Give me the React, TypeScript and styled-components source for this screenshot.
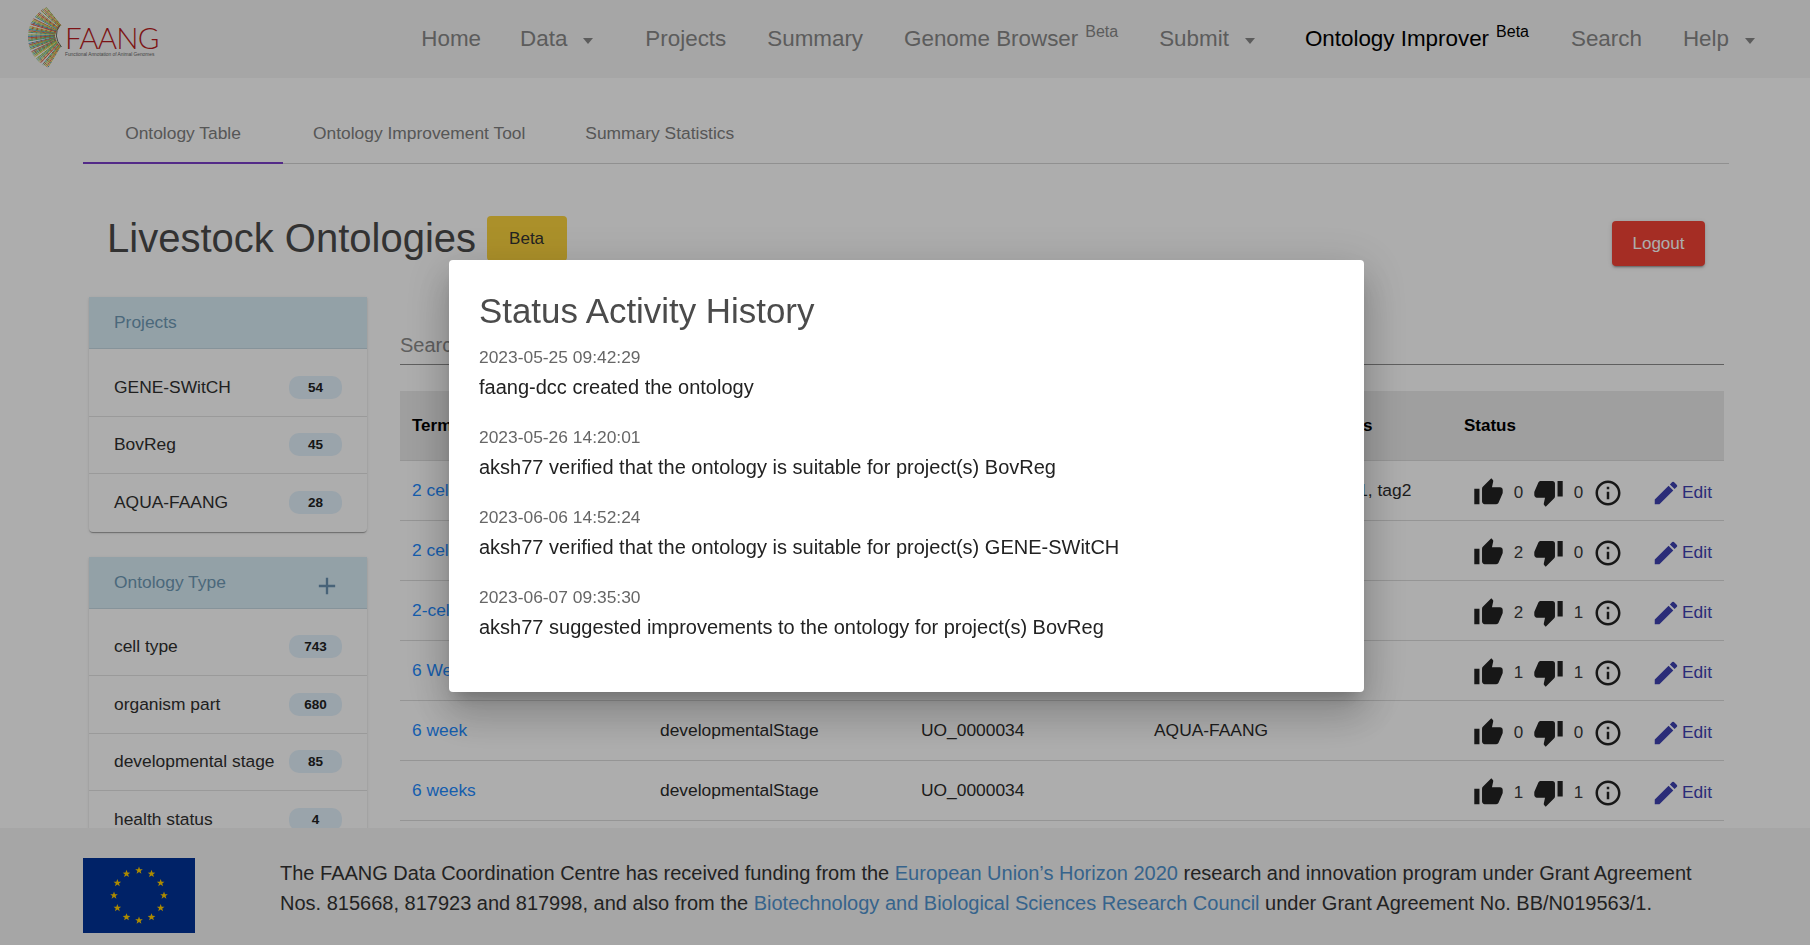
import styled, { createGlobalStyle } from 'styled-components';
import { MdAdd, MdEdit, MdInfoOutline, MdThumbDown, MdThumbUp } from 'react-icons/md';

const GlobalStyle = createGlobalStyle`
  html, body {
    margin: 0;
    padding: 0;
    height: 100%;
    overflow: hidden;
    background: #fff;
    font-family: "Liberation Sans", Arial, sans-serif;
  }
`;

const Page = styled.div`
  width: 1810px;
  height: 945px;
  display: flex;
  flex-direction: column;
  overflow: hidden;
`;

// top navigation
const Header = styled.header`
  flex: 0 0 78px;
  display: flex;
  align-items: center;
  justify-content: space-between;
  background: #f5f5f5;
  padding: 0 55px 0 28px;
`;

const LogoWrap = styled.div`
  display: flex;
  align-items: center;
  width: 132px;
  height: 64px;
`;

const LogoWords = styled.div`
  display: flex;
  flex-direction: column;
  margin-left: 3px;
  margin-top: 5px;
`;

const LogoName = styled.span`
  font-family: Lato, "Liberation Sans", sans-serif;
  font-size: 29.5px;
  line-height: 27px;
  letter-spacing: -0.8px;
  color: #b81c22;
  font-weight: 300;
`;

const LogoTag = styled.span`
  font-size: 4.8px;
  line-height: 8px;
  white-space: nowrap;
  color: #666;
`;

const Nav = styled.nav`
  display: flex;
  align-items: center;
`;

const NavItem = styled.a<{ $active?: boolean; $gap?: number }>`
  position: relative;
  display: flex;
  align-items: center;
  font-size: 22.4px;
  line-height: 28px;
  margin-left: ${(p) => p.$gap ?? 41}px;
  color: ${(p) => (p.$active ? '#000' : '#888')};
`;

const Sup = styled.sup`
  font-size: 16px;
  line-height: 16px;
  align-self: flex-start;
  margin: -1px 0 0 7px;
`;

const Caret = styled.i`
  width: 0;
  height: 0;
  margin: 4px 0 0 16px;
  border-left: 5.5px solid transparent;
  border-right: 5.5px solid transparent;
  border-top: 6px solid #888;
`;

// main area
const Main = styled.main`
  flex: 1;
  min-height: 0;
  overflow: hidden;
  padding: 25px 81px 0 83px;
`;

const Tabs = styled.div`
  display: flex;
  height: 60px;
  border-bottom: 1px solid #d4d4d4;
`;

const Tab = styled.div<{ $active?: boolean }>`
  display: flex;
  align-items: center;
  justify-content: center;
  min-width: 200px;
  box-sizing: border-box;
  padding: 1px 30px 0;
  font-size: 17.4px;
  color: #808080;
  margin-bottom: -1px;
  border-bottom: 2px solid ${(p) => (p.$active ? '#7b3fc9' : 'transparent')};
  &:not(:first-child) {
    min-width: 0;
  }
`;

const TitleRow = styled.div`
  display: flex;
  align-items: flex-start;
  margin-top: 52px;
  padding: 0 24px;
  height: 50px;
`;

const Title = styled.h1`
  margin: 0;
  font-size: 40px;
  font-weight: 400;
  line-height: 44px;
  color: #4b4b4b;
`;

const BetaBadge = styled.span`
  display: flex;
  align-items: center;
  justify-content: center;
  width: 80px;
  height: 45px;
  margin-left: 10.5px;
  border-radius: 4px;
  background: #fdd53e;
  color: #333;
  font-size: 17px;
`;

const LogoutButton = styled.button`
  margin: 5px 0 0 auto;
  width: 93px;
  height: 45px;
  border: none;
  border-radius: 4px;
  background: #f44336;
  color: #fff;
  font: 17px "Liberation Sans", Arial, sans-serif;
  box-shadow: 0 3px 1px -2px rgba(0, 0, 0, 0.2), 0 2px 2px rgba(0, 0, 0, 0.14), 0 1px 5px rgba(0, 0, 0, 0.12);
`;

const Body = styled.div`
  display: flex;
  align-items: flex-start;
  gap: 33px;
  margin-top: 31px;
  padding: 0 5px 0 6px;
`;

const Sidebar = styled.aside`
  flex: 0 0 278px;
  display: flex;
  flex-direction: column;
  gap: 25px;
`;

const Panel = styled.section`
  background: #fff;
  border-radius: 0 0 4px 4px;
  box-shadow: 0 2px 1px -1px rgba(0, 0, 0, 0.2), 0 1px 1px rgba(0, 0, 0, 0.14), 0 1px 3px rgba(0, 0, 0, 0.12);
`;

const PanelHead = styled.div`
  height: 52px;
  box-sizing: border-box;
  padding: 0 25px;
  display: flex;
  align-items: center;
  justify-content: space-between;
  background: #d9edf7;
  border-bottom: 1px solid #c6d9e3;
  font-size: 17.4px;
  color: #6f9ab5;
`;

const PlusIcon = styled(MdAdd)`
  font-size: 28px;
  color: #6a93b2;
  margin: 8px 1px 0 0;
`;

const PanelList = styled.ul`
  list-style: none;
  margin: 0;
  padding: 10px 0 0;
`;

const PanelRow = styled.li`
  display: flex;
  align-items: center;
  justify-content: space-between;
  height: 57.5px;
  box-sizing: border-box;
  padding: 0 25px;
  font-size: 17.4px;
  color: #303030;
  border-bottom: 1px solid #e4e4e4;
  &:last-child {
    border-bottom: none;
  }
`;

const Count = styled.span`
  display: flex;
  align-items: center;
  justify-content: center;
  width: 53px;
  height: 23px;
  border-radius: 10px;
  background: #e3f2fd;
  font-size: 13.5px;
  font-weight: 700;
  color: #222;
`;

const Content = styled.div`
  flex: 1;
  min-width: 0;
`;

const SearchInput = styled.input`
  display: block;
  width: 100%;
  box-sizing: border-box;
  margin-top: 30px;
  height: 38px;
  padding: 0;
  border: none;
  border-bottom: 1px solid #8d8d8d;
  background: transparent;
  font: 20px "Liberation Sans", Arial, sans-serif;
  &::placeholder {
    color: #8c8c8c;
    opacity: 1;
  }
`;

const Table = styled.div`
  margin-top: 26px;
`;

const COLUMNS = '248px 261px 233px 180px 130px 272px';

const HeadRow = styled.div`
  display: grid;
  grid-template-columns: ${COLUMNS};
  align-items: center;
  height: 69px;
  background: #ebebeb;
  border-bottom: 1px solid #dcdcdc;
  font-size: 17px;
  font-weight: 700;
  color: #000;
`;

const Row = styled.div`
  display: grid;
  grid-template-columns: ${COLUMNS};
  align-items: center;
  height: 60px;
  box-sizing: border-box;
  border-bottom: 1px solid #dcdcdc;
  font-size: 17.4px;
  color: #2b2b2b;
`;

const Cell = styled.div`
  padding: 0 12px;
  white-space: nowrap;
`;

const TermLink = styled.a`
  color: #1e8bff;
`;

const StatusCell = styled.div`
  display: flex;
  align-items: center;
  padding: 4px 0 0 21px;
  color: #222;
`;

const Thumb = styled.span`
  display: flex;
  font-size: 31px;
`;

const Votes = styled.span`
  width: 29px;
  text-align: center;
  font-size: 17px;
  color: #3a3a3a;
`;

const InfoIcon = styled(MdInfoOutline)`
  font-size: 30px;
`;

const EditLink = styled.a`
  display: flex;
  align-items: center;
  margin-left: 28px;
  font-size: 17.4px;
  color: #3e42b2;
  svg {
    font-size: 30px;
    margin-right: 1px;
  }
`;

// footer
const Footer = styled.footer`
  flex: 0 0 117px;
  display: flex;
  align-items: flex-start;
  gap: 85px;
  box-sizing: border-box;
  padding: 30px 0 0 83px;
  background: #f5f5f5;
  position: relative;
`;

const FooterText = styled.div`
  font-size: 20px;
  line-height: 30px;
  color: #333;
`;

const FooterLine = styled.div`
  white-space: nowrap;
`;

const FooterLink = styled.a`
  color: #5093ce;
`;

// modal
const Backdrop = styled.div`
  position: fixed;
  inset: 0;
  background: rgba(0, 0, 0, 0.32);
`;

const Dialog = styled.div`
  position: fixed;
  left: 449px;
  top: 260px;
  width: 915px;
  height: 432px;
  box-sizing: border-box;
  padding: 31px 30px;
  background: #fff;
  border-radius: 4px;
  box-shadow: 0 11px 15px -7px rgba(0, 0, 0, 0.2), 0 24px 38px 3px rgba(0, 0, 0, 0.14), 0 9px 46px 8px rgba(0, 0, 0, 0.12);
`;

const DialogTitle = styled.h2`
  margin: 0 0 13px;
  font-size: 34.9px;
  font-weight: 400;
  line-height: 40px;
  color: #4b4b4b;
`;

const Activity = styled.div`
  height: 80px;
`;

const ActivityTime = styled.div`
  font-size: 17.4px;
  line-height: 26px;
  color: #666;
`;

const ActivityText = styled.div`
  margin-top: 3px;
  font-size: 20px;
  line-height: 28px;
  color: #222;
`;

const projects = [
  { name: 'GENE-SWitCH', count: 54 },
  { name: 'BovReg', count: 45 },
  { name: 'AQUA-FAANG', count: 28 },
];

const ontologyTypes = [
  { name: 'cell type', count: 743 },
  { name: 'organism part', count: 680 },
  { name: 'developmental stage', count: 85 },
  { name: 'health status', count: 4 },
];

const rows = [
  { term: '2 cell stage', up: 0, down: 0, tags: 'tag1, tag2' },
  { term: '2 cells', up: 2, down: 0 },
  { term: '2-cell', up: 2, down: 1 },
  { term: '6 Weeks', up: 1, down: 1 },
  { term: '6 week', type: 'developmentalStage', id: 'UO_0000034', project: 'AQUA-FAANG', up: 0, down: 0 },
  { term: '6 weeks', type: 'developmentalStage', id: 'UO_0000034', up: 1, down: 1 },
];

const activities = [
  { time: '2023-05-25 09:42:29', text: 'faang-dcc created the ontology' },
  { time: '2023-05-26 14:20:01', text: 'aksh77 verified that the ontology is suitable for project(s) BovReg' },
  { time: '2023-06-06 14:52:24', text: 'aksh77 verified that the ontology is suitable for project(s) GENE-SWitCH' },
  { time: '2023-06-07 09:35:30', text: 'aksh77 suggested improvements to the ontology for project(s) BovReg' },
];

const RAY_COLORS = ['#8fbf4d', '#e8c63f', '#d9583f', '#e8c63f', '#9cc94f', '#3f9fd0', '#d9583f', '#8fbf4d', '#4bb09a'];
const DASH_COLORS = ['#d9583f', '#3f9fd0', '#8fbf4d', '#d9583f', '#e8c63f'];

function LogoFan() {
  // nine bundles of rays fanning out from the inner crescent
  const rays = [];
  for (let b = 0; b < 9; b++) {
    for (let r = 0; r < 5; r++) {
      const t = (b + 0.1 + r * 0.17) / 9;
      const theta = ((-65 + t * 135) * Math.PI) / 180;
      const inner = Math.abs(2 * t - 1);
      rays.push({
        key: `${b}-${r}`,
        x1: 27 + 6 * inner * inner,
        y1: 18 + 22 * t,
        x2: 33 - 33 * Math.cos(theta),
        y2: 30 + 33 * Math.sin(theta),
        color: RAY_COLORS[(b + r) % RAY_COLORS.length],
        dash: DASH_COLORS[(b + r * 2) % DASH_COLORS.length],
      });
    }
  }
  return (
    <svg width="34" height="64" viewBox="0 0 34 64" style={{ flex: 'none' }}>
      {rays.map((r) => (
        <g key={r.key}>
          <line x1={r.x1} y1={r.y1} x2={r.x2} y2={r.y2} stroke={r.color} strokeWidth="0.9" />
          <line x1={r.x1} y1={r.y1} x2={r.x2} y2={r.y2} stroke={r.dash} strokeWidth="0.9" strokeDasharray="1.5 3" />
        </g>
      ))}
      <path d="M32 18 Q24 29 33.5 40" fill="none" stroke="#4a4a3a" strokeWidth="0.8" />
    </svg>
  );
}

function EuFlag() {
  const stars = Array.from({ length: 12 }, (_, i) => {
    const a = (i * Math.PI) / 6;
    return { x: 56 + Math.sin(a) * 25, y: 37.5 - Math.cos(a) * 25 };
  });
  return (
    <svg width="112" height="75" viewBox="0 0 112 75" style={{ flex: 'none' }}>
      <rect width="112" height="75" fill="#003399" />
      {stars.map((s, i) => (
        <polygon
          key={i}
          transform={`translate(${s.x} ${s.y})`}
          fill="#ffcc00"
          points="0,-4 1,-1.3 3.8,-1.2 1.6,0.5 2.4,3.2 0,1.6 -2.4,3.2 -1.6,0.5 -3.8,-1.2 -1,-1.3"
        />
      ))}
    </svg>
  );
}

export default function App() {
  return (
    <Page>
      <GlobalStyle />
      <Header>
        <LogoWrap>
          <LogoFan />
          <LogoWords>
            <LogoName>FAANG</LogoName>
            <LogoTag>Functional Annotation of Animal Genomes</LogoTag>
          </LogoWords>
        </LogoWrap>
        <Nav>
          <NavItem>Home</NavItem>
          <NavItem $gap={39}>
            Data
            <Caret />
          </NavItem>
          <NavItem $gap={52}>Projects</NavItem>
          <NavItem>Summary</NavItem>
          <NavItem>
            Genome Browser<Sup>Beta</Sup>
          </NavItem>
          <NavItem>
            Submit
            <Caret />
          </NavItem>
          <NavItem $active $gap={50}>
            Ontology Improver<Sup>Beta</Sup>
          </NavItem>
          <NavItem $gap={42}>Search</NavItem>
          <NavItem>
            Help
            <Caret />
          </NavItem>
        </Nav>
      </Header>

      <Main>
        <Tabs>
          <Tab $active>Ontology Table</Tab>
          <Tab>Ontology Improvement Tool</Tab>
          <Tab>Summary Statistics</Tab>
        </Tabs>

        <TitleRow>
          <Title>Livestock Ontologies</Title>
          <BetaBadge>Beta</BetaBadge>
          <LogoutButton>Logout</LogoutButton>
        </TitleRow>

        <Body>
          <Sidebar>
            <Panel>
              <PanelHead>Projects</PanelHead>
              <PanelList>
                {projects.map((p) => (
                  <PanelRow key={p.name}>
                    {p.name}
                    <Count>{p.count}</Count>
                  </PanelRow>
                ))}
              </PanelList>
            </Panel>
            <Panel>
              <PanelHead>
                Ontology Type
                <PlusIcon />
              </PanelHead>
              <PanelList>
                {ontologyTypes.map((t) => (
                  <PanelRow key={t.name}>
                    {t.name}
                    <Count>{t.count}</Count>
                  </PanelRow>
                ))}
              </PanelList>
            </Panel>
          </Sidebar>

          <Content>
            <SearchInput placeholder="Search" readOnly />
            <Table>
              <HeadRow>
                <Cell>Term</Cell>
                <Cell />
                <Cell />
                <Cell />
                <Cell>Tags</Cell>
                <Cell>Status</Cell>
              </HeadRow>
              {rows.map((r) => (
                <Row key={r.term}>
                  <Cell>
                    <TermLink>{r.term}</TermLink>
                  </Cell>
                  <Cell>{r.type}</Cell>
                  <Cell>{r.id}</Cell>
                  <Cell>{r.project}</Cell>
                  <Cell>{r.tags}</Cell>
                  <StatusCell>
                    <Thumb>
                      <MdThumbUp />
                    </Thumb>
                    <Votes>{r.up}</Votes>
                    <Thumb>
                      <MdThumbDown />
                    </Thumb>
                    <Votes>{r.down}</Votes>
                    <InfoIcon />
                    <EditLink>
                      <MdEdit />
                      Edit
                    </EditLink>
                  </StatusCell>
                </Row>
              ))}
            </Table>
          </Content>
        </Body>
      </Main>

      <Footer>
        <EuFlag />
        <FooterText>
          <FooterLine>
            The FAANG Data Coordination Centre has received funding from the{' '}
            <FooterLink>European Union&rsquo;s Horizon 2020</FooterLink> research and innovation program under Grant
            Agreement
          </FooterLine>
          <FooterLine>
            Nos. 815668, 817923 and 817998, and also from the{' '}
            <FooterLink>Biotechnology and Biological Sciences Research Council</FooterLink> under Grant Agreement No.
            BB/N019563/1.
          </FooterLine>
        </FooterText>
      </Footer>

      <Backdrop />
      <Dialog>
        <DialogTitle>Status Activity History</DialogTitle>
        {activities.map((a) => (
          <Activity key={a.time}>
            <ActivityTime>{a.time}</ActivityTime>
            <ActivityText>{a.text}</ActivityText>
          </Activity>
        ))}
      </Dialog>
    </Page>
  );
}
